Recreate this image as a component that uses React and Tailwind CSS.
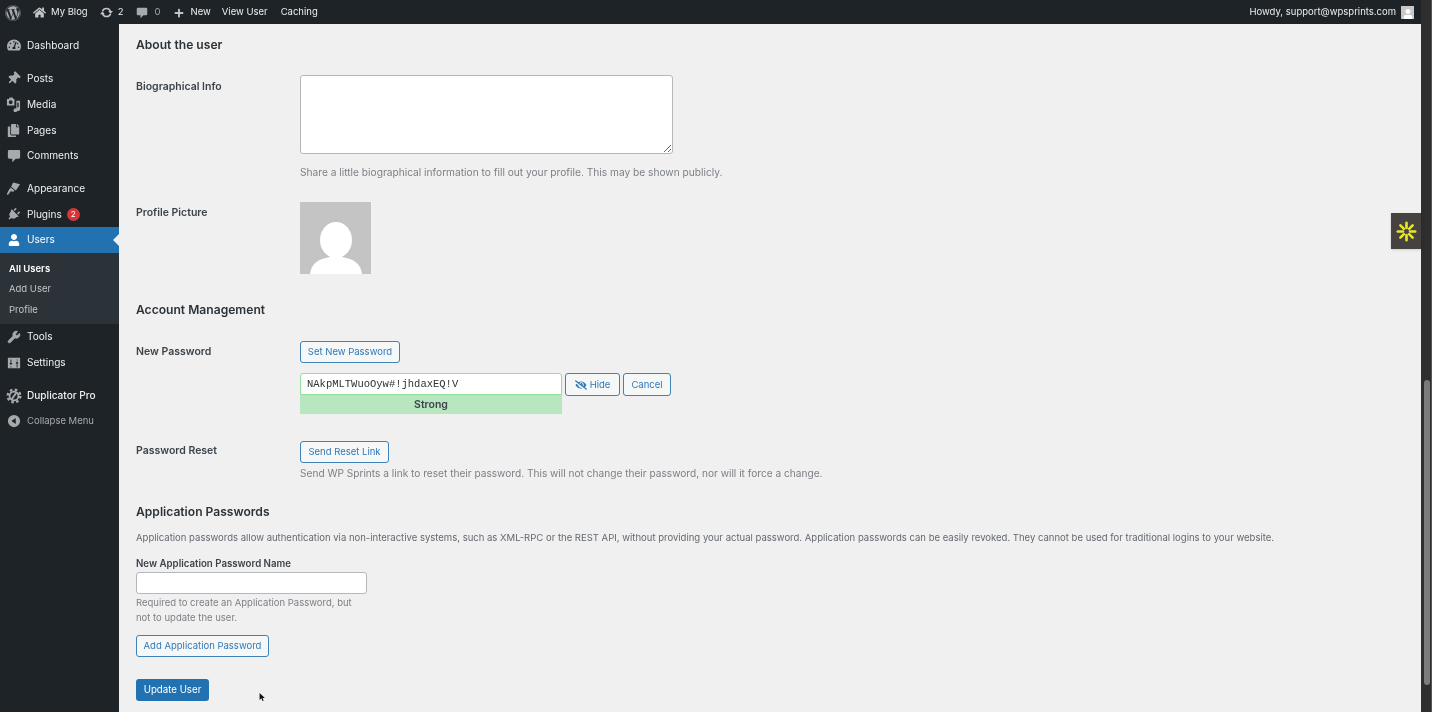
import { FaWordpress, FaHome, FaPlus, FaTachometerAlt, FaThumbtack, FaCopy, FaPlug, FaUser, FaEyeSlash } from 'react-icons/fa';
import { Wrench } from 'lucide-react';

function MediaIcon() {
  return (
    <svg viewBox="0 0 16 16" className="w-[15px] h-[15px]" fill="currentColor">
      <path d="M1 2h2l1-1.500h3L8 2h1v7H1zM5 3.500a2 2 0 1 0 0 4 2 2 0 0 0 0-4z" fillRule="evenodd" />
      <path d="M11 4h4v9a2 2 0 1 1-1.500-2V6H12v8a2 2 0 0 1-4 .3 2 2 0 0 1 3-1.900z" />
    </svg>
  );
}

function SettingsIcon() {
  return (
    <svg viewBox="0 0 16 16" className="w-[14px] h-[14px]" fill="currentColor">
      <path d="M1 2h14v12H1zM4 4v4H2.800l1.700 2.500L6.200 8H5V4zm0 8v1h1v-1zm7-8v1h1V4zm.5 2-1.700 2.500H11V13h1V8.500h1.200z" fillRule="evenodd" />
    </svg>
  );
}

function SyncIcon() {
  return (
    <svg viewBox="0 0 16 16" className="w-[13px] h-[13px] ml-[12px] text-[#c3c4c7]" fill="none" stroke="currentColor" strokeWidth="2">
      <path d="M3 6.500a5.200 5.200 0 0 1 9.800 0" />
      <path d="M13 9.500a5.200 5.200 0 0 1-9.800 0" />
      <path d="M10 6h6l-3 3.500zM0 10h6L3 6.500z" fill="currentColor" stroke="none" />
    </svg>
  );
}

function BubbleIcon({ className }) {
  return (
    <svg viewBox="0 0 16 16" className={className} fill="currentColor">
      <path d="M2.500 1h11A1.500 1.500 0 0 1 15 2.500v7a1.500 1.500 0 0 1-1.500 1.500H10l-4 4v-4H2.500A1.500 1.500 0 0 1 1 9.500v-7A1.500 1.500 0 0 1 2.500 1z" />
    </svg>
  );
}

function BrushIcon() {
  return (
    <svg viewBox="0 0 16 16" className="w-[15px] h-[15px]" fill="currentColor">
      <path d="M7.500 1.500 15 3.500 10.500 10 5.500 6z" />
      <path d="M5 7l4 3.200-1.200 1.300L5 11l-2.500 3.500C1.500 15 .7 14.500 1 13.500L3 9.500z" />
    </svg>
  );
}

function GearIcon() {
  return (
    <svg viewBox="0 0 16 16" className="w-[16px] h-[16px]" fill="none" stroke="currentColor">
      <circle cx="8" cy="8" r="6.300" strokeWidth="2.400" strokeDasharray="2.500 2.450" />
      <circle cx="8" cy="8" r="4.400" strokeWidth="1.800" />
      <path d="M10.500 4.500 5.500 11.500" strokeWidth="2" />
    </svg>
  );
}

function CollapseIcon() {
  return (
    <svg viewBox="0 0 16 16" className="w-[14px] h-[14px]" fill="currentColor">
      <path d="M8 1a7 7 0 1 1 0 14A7 7 0 0 1 8 1zm2 3.500L5 8l5 3.500z" fillRule="evenodd" />
    </svg>
  );
}

function MenuRow({ icon, label, active, badge, muted, bold }) {
  return (
    <div className={`relative flex items-center h-[25.6px] pl-[3px] ${active ? 'bg-[#2271b1] text-white' : muted ? 'text-[#a7aaad]' : 'text-[#eef0f1]'}`}>
      <span className={`w-[21px] flex justify-center shrink-0 ${active ? 'text-white' : 'text-[#a7aaad]'}`}>{icon}</span>
      <span className={`ml-[3px] ${muted ? 'text-[9.500px]' : 'text-[10.100px]'} ${bold ? 'font-medium' : ''}`}>{label}</span>
      {badge && (
        <span className="ml-[5px] w-[13px] h-[13px] rounded-full bg-[#d63638] text-white text-[8px] flex items-center justify-center">{badge}</span>
      )}
      {active && (
        <span className="absolute right-0 top-[7px] border-y-[6px] border-y-transparent border-r-[6px] border-r-[#f0f0f1]" />
      )}
    </div>
  );
}

function Sidebar() {
  return (
    <aside className="w-[119px] shrink-0 bg-[#1d2327] pt-[8.500px]">
      <MenuRow icon={<FaTachometerAlt size={14} />} label="Dashboard" />
      <div className="h-[8px]" />
      <MenuRow icon={<FaThumbtack size={13} className="rotate-45" />} label="Posts" />
      <MenuRow icon={<MediaIcon />} label="Media" />
      <MenuRow icon={<FaCopy size={13} />} label="Pages" />
      <MenuRow icon={<BubbleIcon className="w-[14px] h-[14px]" />} label="Comments" />
      <div className="h-[7.500px]" />
      <MenuRow icon={<BrushIcon />} label="Appearance" />
      <MenuRow icon={<FaPlug size={13} className="rotate-45" />} label="Plugins" badge="2" />
      <MenuRow icon={<FaUser size={12} />} label="Users" active />
      <div className="bg-[#2c3338] h-[71.500px] pl-[9px] pt-[6px] text-[9.500px] text-[#c3c4c7]">
        <div className="h-[20.500px] flex items-center text-white font-semibold">All Users</div>
        <div className="h-[20.500px] flex items-center">Add User</div>
        <div className="h-[20.500px] flex items-center">Profile</div>
      </div>
      <MenuRow icon={<Wrench size={14} fill="currentColor" strokeWidth={1.5} />} label="Tools" />
      <MenuRow icon={<SettingsIcon />} label="Settings" />
      <div className="h-[7.500px]" />
      <MenuRow icon={<GearIcon />} label="Duplicator Pro" bold />
      <MenuRow icon={<CollapseIcon />} label="Collapse Menu" muted />
    </aside>
  );
}

function TopBar() {
  return (
    <header className="h-[24px] shrink-0 bg-[#1d2327] flex items-center text-[9.500px] text-[#eceeef] pl-[5px] pr-[7px] pt-[1px]">
      <FaWordpress size={16} className="text-[#a7aaad]" />
      <FaHome size={13} className="ml-[12px] text-[#c3c4c7]" />
      <span className="ml-[5px]">My Blog</span>
      <SyncIcon />
      <span className="ml-[5px]">2</span>
      <BubbleIcon className="w-[12px] h-[12px] ml-[13px] text-[#a7aaad]" />
      <span className="ml-[6px] text-[#a7aaad]">0</span>
      <FaPlus size={10} className="ml-[14px] text-[#c3c4c7]" />
      <span className="ml-[6px]">New</span>
      <span className="ml-[11px]">View User</span>
      <span className="ml-[13px]">Caching</span>
      <span className="ml-auto">Howdy, support@wpsprints.com</span>
      <span className="ml-[5px] w-[13px] h-[13px] bg-[#c8c8c8] overflow-hidden flex items-end justify-center">
        <FaUser size={10} className="text-white" />
      </span>
    </header>
  );
}

function SecondaryButton({ className, children }) {
  return (
    <button className={`h-[22px] flex items-center justify-center border border-[#3f82b8] rounded-[3px] bg-[#f6f7f7] text-[#2f7ab8] text-[9.500px] ${className}`}>
      {children}
    </button>
  );
}

function Field({ label, className, children }) {
  return (
    <div className={`flex ${className}`}>
      <div className="w-[164px] shrink-0 text-[10.500px] font-semibold text-[#3c434a]">{label}</div>
      <div>{children}</div>
    </div>
  );
}

function Heading({ className, children }) {
  return <h2 className={`text-[12.100px] leading-[16px] font-semibold text-[#2c3338] ${className}`}>{children}</h2>;
}

function Main() {
  return (
    <main className="flex-1 bg-[#f0f0f1] pl-[17px] pt-[13px] overflow-hidden">
      <Heading>About the user</Heading>

      <Field label="Biographical Info" className="mt-[22px] leading-[24px]">
        <textarea className="block w-[373px] h-[79px] bg-white border border-[#b5b7ba] rounded-[3px] resize-y" />
        <p className="mt-[10px] text-[10.180px] leading-[16px] text-[#7c8085]">Share a little biographical information to fill out your profile. This may be shown publicly.</p>
      </Field>

      <Field label="Profile Picture" className="mt-[22px] leading-[22px]">
        <svg viewBox="0 0 71 72" className="block w-[71px] h-[72px] bg-[#c4c4c4]" fill="#fff">
          <ellipse cx="36" cy="38" rx="16" ry="18" />
          <path d="M10 72c1-10 8-15 20-17h12c12 2 19 7 20 17z" />
        </svg>
      </Field>

      <Heading className="mt-[28px]">Account Management</Heading>

      <Field label="New Password" className="mt-[23px] leading-[22px]">
        <SecondaryButton className="w-[100px]">Set New Password</SecondaryButton>
        <div className="mt-[10px] flex items-start">
          <div className="w-[262px]">
            <div className="h-[22px] bg-white border border-[#8fe09c] rounded-t-[3px] flex items-center pl-[6px] text-[10.500px] text-[#2c3338] font-['Liberation_Mono',monospace]">NAkpMLTWuoOyw#!jhdaxEQ!V</div>
            <div className="h-[19px] pt-[1px] bg-[#b8e6bf] flex items-center justify-center text-[10.500px] leading-none font-semibold text-[#3c434a]">Strong</div>
          </div>
          <SecondaryButton className="ml-[3px] w-[55px] h-[23px]">
            <FaEyeSlash size={12} className="mr-[3px]" />Hide
          </SecondaryButton>
          <SecondaryButton className="ml-[3px] w-[48px] h-[23px]">Cancel</SecondaryButton>
        </div>
      </Field>

      <Field label="Password Reset" className="mt-[27px] leading-[20px]">
        <SecondaryButton className="w-[89px]">Send Reset Link</SecondaryButton>
        <p className="mt-[2px] text-[10.130px] leading-[16px] text-[#7c8085]">Send WP Sprints a link to reset their password. This will not change their password, nor will it force a change.</p>
      </Field>

      <Heading className="mt-[23px]">Application Passwords</Heading>
      <p className="mt-[10px] text-[9.520px] leading-[16px] text-[#646970]">Application passwords allow authentication via non-interactive systems, such as XML-RPC or the REST API, without providing your actual password. Application passwords can be easily revoked. They cannot be used for traditional logins to your website.</p>

      <label className="block mt-[11px] text-[9.700px] leading-[14px] font-semibold text-[#3c434a]">New Application Password Name</label>
      <input className="block mt-[1px] w-[231px] h-[22px] bg-white border border-[#b5b7ba] rounded-[3px]" />
      <p className="mt-[1px] w-[231px] text-[9.500px] leading-[15px] text-[#7c8085]">Required to create an Application Password, but not to update the user.</p>

      <SecondaryButton className="mt-[10px] w-[133px]">Add Application Password</SecondaryButton>
      <button className="mt-[22px] w-[73px] h-[22px] rounded-[3px] bg-[#2271b1] text-white text-[9.700px] flex items-center justify-center">Update User</button>
    </main>
  );
}

export default function App() {
  return (
    <div className="relative flex h-[712px] overflow-hidden bg-[#f0f0f1] font-['Inter',sans-serif] blur-[0.6px]">
      <div className="flex-1 min-w-0 flex flex-col">
        <TopBar />
        <div className="flex-1 min-h-0 flex">
          <Sidebar />
          <Main />
        </div>
      </div>

      <div className="w-[11px] shrink-0 bg-[#2e2e2e] pt-[380px] pl-[3px] border-r border-r-[#555]">
        <div className="w-[6px] h-[305px] rounded-[3px] bg-[#7b7b7b]" />
      </div>

      {/* floating widget tab */}
      <div className="absolute left-[1391px] top-[213px] w-[30px] h-[36px] bg-[#46423f] shadow flex items-center justify-center">
        <svg viewBox="0 0 24 24" className="w-[21px] h-[21px]" stroke="#e6e62e" strokeWidth="3" strokeLinecap="round">
          <path d="M12 2v6M12 16v6M2 12h6M16 12h6M5 5l4 4M15 15l4 4M19 5l-4 4M9 15l-4 4" />
        </svg>
      </div>

      {/* mouse pointer */}
      <svg viewBox="0 0 12 16" className="absolute left-[259px] top-[691px] w-[7px] h-[12px]" fill="#111">
        <path d="M1 1v12l3-3 2 5 2-1-2-4.500h4z" />
      </svg>
    </div>
  );
}
